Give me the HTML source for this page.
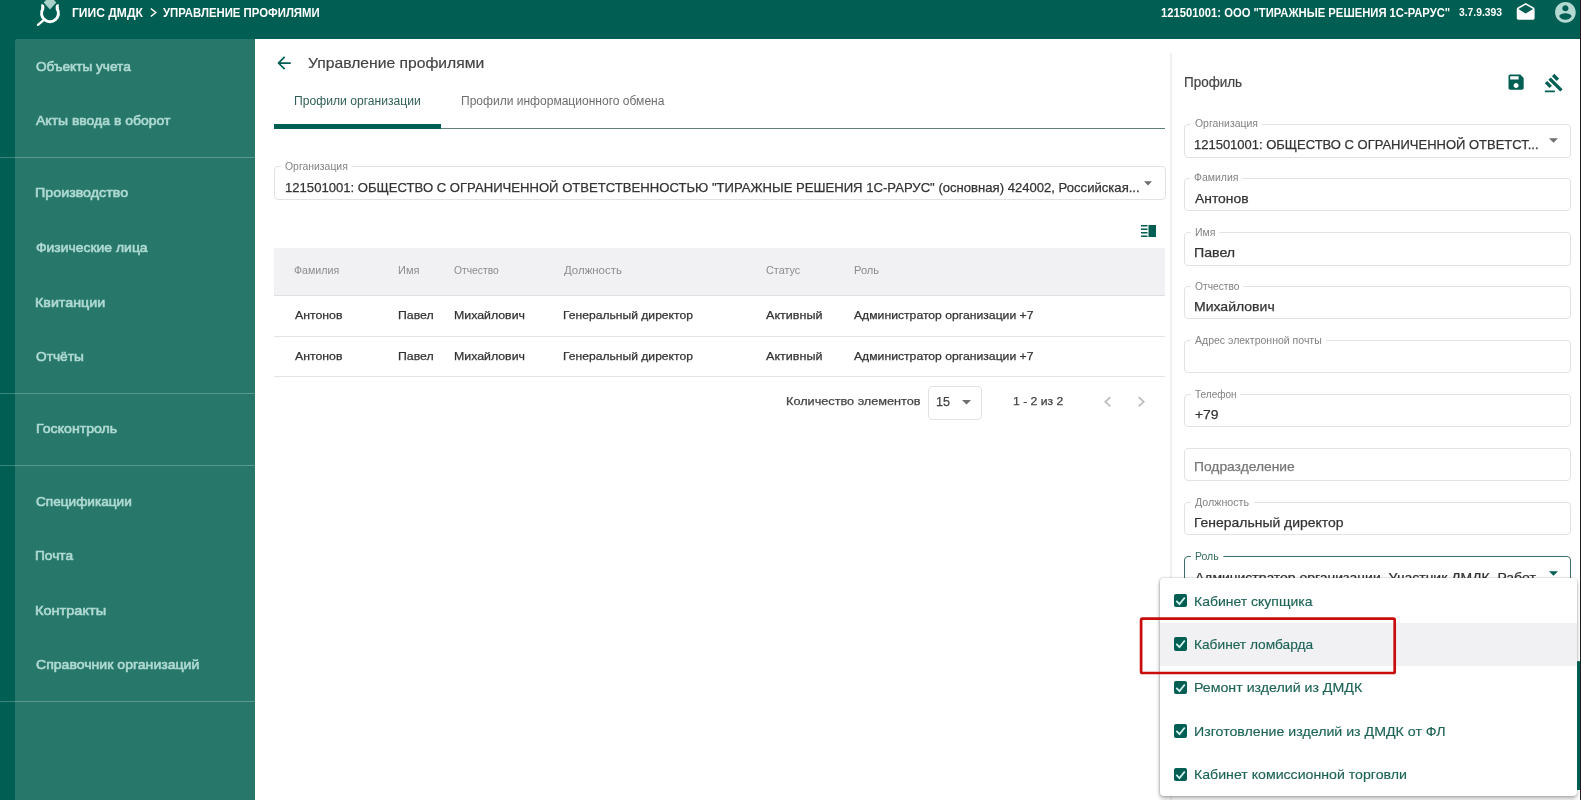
<!DOCTYPE html>
<html lang="ru">
<head>
<meta charset="utf-8">
<title>ГИИС ДМДК — Управление профилями</title>
<style>
*{box-sizing:border-box;margin:0;padding:0}
html,body{width:1581px;height:800px;overflow:hidden;background:#fff}
body{font-family:"Liberation Sans",sans-serif;position:relative;color:#333}
#app{position:absolute;left:0;top:0;width:1581px;height:800px;overflow:hidden;will-change:transform}
.abs{position:absolute;white-space:nowrap;line-height:1;transform-origin:0 0}
#hdr{position:absolute;left:0;top:0;width:1581px;height:44px;background:#005e52}
#strip{position:absolute;left:0;top:39px;width:15px;height:761px;background:#005e52}
#main{position:absolute;left:255px;top:39px;width:1326px;height:761px;background:#fff}
#side{position:absolute;left:15px;top:39px;width:240.500px;height:761px;background:#27786b;border-top-left-radius:2px}
.hb{color:#fff;font-weight:bold;font-size:12px}
.mi{color:#b0dad2;font-weight:normal;font-size:13.500px;-webkit-text-stroke:0.600px #b0dad2}
.dv{position:absolute;left:0;width:255px;height:1px;background:rgba(255,255,255,.24)}
.fld{position:absolute;border:1px solid #e2e2e2;border-radius:4px;background:#fff}
.lbl{font-size:10px;color:#828282;background:#fff;box-shadow:4px 0 0 #fff,-4px 0 0 #fff}
.val{font-size:13.500px;color:#333;-webkit-text-stroke:0.250px}
.th{font-size:10.500px;color:#8c8c8c}
.td{font-size:11.600px;color:#333;-webkit-text-stroke:0.250px}
.opt{font-size:13.500px;color:#1c6356;-webkit-text-stroke:0.150px}
.cb{position:absolute;width:13.400px;height:13.400px;background:#005e52;border-radius:2px}
.cb svg{position:absolute;left:0;top:0}
</style>
</head>
<body>
<div id="app">
<div id="hdr"></div>
<div id="strip"></div>
<div id="side"></div>
<div id="main"></div>

<svg class="abs" style="left:34px;top:0" width="30" height="28" viewBox="0 0 30 28">
  <path d="M8.800 4.200 L8.730 9 A8.400 8.400 0 1 0 23.270 9 L23.200 4.200" fill="none" stroke="#fff" stroke-width="3.100" stroke-linejoin="round"/>
  <line x1="9.300" y1="20.400" x2="4" y2="24.800" stroke="#fff" stroke-width="2.400" stroke-linecap="round"/>
  <polygon points="16,-4.400 22.400,2.600 16,9.600 9.600,2.600" fill="#005e52" stroke="#005e52" stroke-width="3.200"/>
  <polygon points="16,-4.400 22.300,2.600 16,9.500 9.700,2.600" fill="#a9d1ca"/>
</svg>
<div class="abs hb" id="h1" style="left:72.41px;top:6.5px;transform:scaleX(1.0057);">ГИИС ДМДК</div>
<svg class="abs" style="left:149px;top:7px" width="9" height="11" viewBox="0 0 9 11"><path d="M1.800 1.500 L6.800 5.500 L1.800 9.500" fill="none" stroke="#fff" stroke-width="1.500"/></svg>
<div class="abs hb" id="h2" style="left:163.33px;top:6.5px;transform:scaleX(0.9467);">УПРАВЛЕНИЕ ПРОФИЛЯМИ</div>
<div class="abs hb" id="h3" style="left:1161.45px;top:6.5px;transform:scaleX(0.9372);">121501001: ООО "ТИРАЖНЫЕ РЕШЕНИЯ 1С-РАРУС"</div>
<div class="abs hb" id="h4" style="left:1458.57px;top:6.8px;font-size:10.500px;transform:scaleX(0.982);">3.7.9.393</div>
<svg class="abs" style="left:1514.800px;top:1.800px" width="21.400" height="21.400" viewBox="0 0 24 24"><path fill="#fff" d="M21.990 8c0-.72-.37-1.350-.94-1.700L12 1 2.950 6.300C2.380 6.650 2 7.280 2 8v10c0 1.100.9 2 2 2h16c1.100 0 2-.9 2-2l-.01-10zM12 13L3.740 7.840 12 3l8.260 4.840L12 13z"/></svg>
<svg class="abs" style="left:1553.200px;top:-0.100px" width="24.800" height="24.800" viewBox="0 0 24 24"><path fill="#b4d8d2" d="M12 2C6.480 2 2 6.480 2 12s4.480 10 10 10 10-4.480 10-10S17.520 2 12 2zm0 3c1.660 0 3 1.340 3 3s-1.340 3-3 3-3-1.340-3-3 1.340-3 3-3zm0 14.200c-2.500 0-4.710-1.280-6-3.220.03-1.990 4-3.080 6-3.080 1.990 0 5.970 1.090 6 3.080-1.290 1.940-3.500 3.220-6 3.220z"/></svg>
<div class="abs mi" id="m1" style="left:35.7px;top:59.6px;transform:scaleX(1.0102);">Объекты учета</div>
<div class="abs mi" id="m2" style="left:36.25px;top:114px;transform:scaleX(1.0351);">Акты ввода в оборот</div>
<div class="abs mi" id="m3" style="left:35.41px;top:186.4px;transform:scaleX(1.0581);">Производство</div>
<div class="abs mi" id="m4" style="left:35.87px;top:240.6px;transform:scaleX(1.0317);">Физические лица</div>
<div class="abs mi" id="m5" style="left:35.14px;top:295.6px;transform:scaleX(1.057);">Квитанции</div>
<div class="abs mi" id="m6" style="left:35.83px;top:350px;transform:scaleX(1.013);">Отчёты</div>
<div class="abs mi" id="m7" style="left:35.51px;top:422.4px;transform:scaleX(1.0482);">Госконтроль</div>
<div class="abs mi" id="m8" style="left:35.61px;top:494.6px;transform:scaleX(1.0082);">Спецификации</div>
<div class="abs mi" id="m9" style="left:35.31px;top:549px;transform:scaleX(1.0157);">Почта</div>
<div class="abs mi" id="m10" style="left:35.09px;top:603.8px;transform:scaleX(1.0777);">Контракты</div>
<div class="abs mi" id="m11" style="left:35.54px;top:658px;transform:scaleX(1.0424);">Справочник организаций</div>
<div class="dv" style="top:157px"></div>
<div class="dv" style="top:393px"></div>
<div class="dv" style="top:465px"></div>
<div class="dv" style="top:701px"></div>
<svg class="abs" style="left:274.300px;top:53.050px" width="20.100" height="20.100" viewBox="0 0 24 24"><path fill="#005e52" d="M20 11H7.830l5.590-5.590L12 4l-8 8 8 8 1.410-1.410L7.830 13H20v-2z"/></svg>
<div class="abs " id="t1" style="left:307.72px;top:55.4px;font-size:15.500px;color:#444;-webkit-text-stroke:0.200px;transform:scaleX(1.0116);">Управление профилями</div>
<div class="abs " id="tab1" style="left:294.07px;top:94.8px;font-size:12px;color:#2f5f57;transform:scaleX(1.0103);">Профили организации</div>
<div class="abs " id="tab2" style="left:461.28px;top:94.8px;font-size:12px;color:#6e6e6e;transform:scaleX(1.0027);">Профили информационного обмена</div>
<div style="position:absolute;left:274px;top:128px;width:891px;height:1px;background:#5f7f79"></div>
<div style="position:absolute;left:274px;top:124px;width:167px;height:5px;background:#005e52"></div>
<div class="fld" style="left:274px;top:166px;width:892px;height:34px"></div>
<div class="abs lbl" id="l0" style="left:284.78px;top:162.0px;transform:scaleX(1.0412);">Организация</div>
<div class="abs val" id="v0" style="left:284.74px;top:180.7px;transform:scaleX(0.9699);">121501001: ОБЩЕСТВО С ОГРАНИЧЕННОЙ ОТВЕТСТВЕННОСТЬЮ "ТИРАЖНЫЕ РЕШЕНИЯ 1С-РАРУС" (основная) 424002, Российская...</div>
<svg class="abs" style="left:1144px;top:181px" width="8" height="5" viewBox="0 0 8 5"><path d="M0 0.300h8L4 4.600z" fill="#6f6f6f"/></svg>
<svg class="abs" style="left:1141px;top:225px" width="16" height="13" viewBox="0 0 16 13"><path fill="#005e52" d="M0 0h6.500v1.500H0zM0 3.500h6.500v1.500H0zM0 7h6.500v1.500H0zM0 10.500h6.500v1.500H0zM7.500 0H15v12H7.500z"/></svg>
<div style="position:absolute;left:274px;top:248px;width:891px;height:48px;background:#f1f1f3;border-bottom:1px solid #dfdfdf"></div>
<div class="abs th" id="th1" style="left:294.26px;top:265.2px;transform:scaleX(1.0125);">Фамилия</div>
<div class="abs th" id="th2" style="left:398.0px;top:265.2px;transform:scaleX(1.0463);">Имя</div>
<div class="abs th" id="th3" style="left:454.23px;top:265.2px;transform:scaleX(0.9812);">Отчество</div>
<div class="abs th" id="th4" style="left:563.68px;top:265.2px;transform:scaleX(1.0892);">Должность</div>
<div class="abs th" id="th5" style="left:765.71px;top:265.2px;transform:scaleX(1.033);">Статус</div>
<div class="abs th" id="th6" style="left:853.56px;top:265.2px;transform:scaleX(1.0589);">Роль</div>
<div class="abs td" id="r1a" style="left:294.88px;top:309.2px;transform:scaleX(1.0602);">Антонов</div>
<div class="abs td" id="r1b" style="left:397.71px;top:309.2px;transform:scaleX(1.0582);">Павел</div>
<div class="abs td" id="r1c" style="left:453.65px;top:309.2px;transform:scaleX(1.0629);">Михайлович</div>
<div class="abs td" id="r1d" style="left:563.18px;top:309.2px;transform:scaleX(1.0449);">Генеральный директор</div>
<div class="abs td" id="r1e" style="left:765.91px;top:309.2px;transform:scaleX(1.0835);">Активный</div>
<div class="abs td" id="r1f" style="left:854.32px;top:309.2px;transform:scaleX(1.0505);">Администратор организации +7</div>
<div class="abs td" id="r2a" style="left:294.88px;top:350.1px;transform:scaleX(1.0602);">Антонов</div>
<div class="abs td" id="r2b" style="left:397.71px;top:350.1px;transform:scaleX(1.0582);">Павел</div>
<div class="abs td" id="r2c" style="left:453.65px;top:350.1px;transform:scaleX(1.0629);">Михайлович</div>
<div class="abs td" id="r2d" style="left:563.18px;top:350.1px;transform:scaleX(1.0449);">Генеральный директор</div>
<div class="abs td" id="r2e" style="left:765.91px;top:350.1px;transform:scaleX(1.0835);">Активный</div>
<div class="abs td" id="r2f" style="left:854.32px;top:350.1px;transform:scaleX(1.0505);">Администратор организации +7</div>
<div style="position:absolute;left:274px;top:336px;width:891px;height:1px;background:#e4e4e4"></div>
<div style="position:absolute;left:274px;top:376px;width:891px;height:1px;background:#e4e4e4"></div>
<div class="abs td" id="pg1" style="left:786.18px;top:395.3px;color:#444;transform:scaleX(1.0941);">Количество элементов</div>
<div class="fld" style="left:928px;top:386px;width:54px;height:34px"></div>
<div class="abs td" id="pg2" style="left:935.99px;top:396.1px;color:#444;font-size:12px;transform:scaleX(1.0428);">15</div>
<svg class="abs" style="left:961.500px;top:400.300px" width="9" height="5" viewBox="0 0 9 5"><path d="M0 0h9L4.500 4.600z" fill="#6f6f6f"/></svg>
<div class="abs td" id="pg3" style="left:1012.85px;top:395.3px;color:#444;transform:scaleX(1.0515);">1 - 2 из 2</div>
<svg class="abs" style="left:1103px;top:396px" width="9" height="12" viewBox="0 0 9 12"><path d="M7.300 1.200L2.300 5.800l5 4.600" fill="none" stroke="#bcbcbc" stroke-width="1.700"/></svg>
<svg class="abs" style="left:1137px;top:396px" width="9" height="12" viewBox="0 0 9 12"><path d="M1.700 1.200L6.700 5.800l-5 4.600" fill="none" stroke="#bcbcbc" stroke-width="1.700"/></svg>
<div style="position:absolute;left:1170px;top:53px;width:2px;height:747px;background:#f0f0f2"></div>
<div class="abs " id="p1" style="left:1183.8px;top:75px;font-size:14.200px;color:#444;-webkit-text-stroke:0.200px;transform:scaleX(0.9488);">Профиль</div>
<svg class="abs" style="left:1506.400px;top:72.400px" width="20.200" height="20.200" viewBox="0 0 24 24"><path fill="#005e52" d="M17 3H5c-1.110 0-2 .9-2 2v14c0 1.100.89 2 2 2h14c1.100 0 2-.9 2-2V7l-4-4zm-5 16c-1.660 0-3-1.340-3-3s1.340-3 3-3 3 1.340 3 3-1.340 3-3 3zm3-10H5V5h10v4z"/></svg>
<svg class="abs" style="left:1544px;top:72.550px" width="20.100" height="20.100" viewBox="0 0 24 24"><path fill="#005e52" d="M1 21h12v2H1zM5.245 8.070l2.830-2.827 14.140 14.142-2.828 2.828zM12.317 1l5.657 5.656-2.830 2.830-5.654-5.660zM3.825 9.485l5.657 5.657-2.828 2.828-5.657-5.657z"/></svg>
<div class="fld" style="left:1184px;top:124px;width:387px;height:34px;"></div>
<div class="abs lbl" id="l1" style="left:1194.65px;top:119.4px;transform:scaleX(1.0442);">Организация</div>
<div class="abs val" id="v1" style="left:1194.02px;top:137.6px;transform:scaleX(0.9622);">121501001: ОБЩЕСТВО С ОГРАНИЧЕННОЙ ОТВЕТСТ...</div>
<svg class="abs" style="left:1548.600px;top:138.3px" width="9" height="5" viewBox="0 0 9 5"><path d="M0 0.200h9L4.500 4.700z" fill="#6f6f6f"/></svg>
<div class="fld" style="left:1184px;top:178px;width:387px;height:33px;"></div>
<div class="abs lbl" id="l2" style="left:1194.47px;top:173.4px;transform:scaleX(1.0466);">Фамилия</div>
<div class="abs val" id="v2" style="left:1194.58px;top:191.7px;transform:scaleX(1.0272);">Антонов</div>
<div class="fld" style="left:1184px;top:232px;width:387px;height:34px;"></div>
<div class="abs lbl" id="l3" style="left:1194.5px;top:227.6px;transform:scaleX(1.0466);">Имя</div>
<div class="abs val" id="v3" style="left:1194.09px;top:245.9px;transform:scaleX(1.0499);">Павел</div>
<div class="fld" style="left:1184px;top:286px;width:387px;height:33px;"></div>
<div class="abs lbl" id="l4" style="left:1194.59px;top:281.7px;transform:scaleX(1.0241);">Отчество</div>
<div class="abs val" id="v4" style="left:1194.1px;top:299.6px;transform:scaleX(1.0382);">Михайлович</div>
<div class="fld" style="left:1184px;top:340px;width:387px;height:33px;"></div>
<div class="abs lbl" id="l5" style="left:1194.89px;top:335.8px;transform:scaleX(1.0509);">Адрес электронной почты</div>
<div class="fld" style="left:1184px;top:394px;width:387px;height:33px;"></div>
<div class="abs lbl" id="l6" style="left:1194.93px;top:390.0px;transform:scaleX(1.0028);">Телефон</div>
<div class="abs val" id="v6" style="left:1194.5px;top:407.6px;transform:scaleX(1.0272);">+79</div>
<div class="fld" style="left:1184px;top:448px;width:387px;height:33px;"></div>
<div class="abs val" id="v7" style="left:1194.3px;top:460.2px;color:#777;transform:scaleX(1.0239);">Подразделение</div>
<div class="fld" style="left:1184px;top:502px;width:387px;height:33px;"></div>
<div class="abs lbl" id="l8" style="left:1195.35px;top:498.0px;transform:scaleX(1.068);">Должность</div>
<div class="abs val" id="v8" style="left:1194.11px;top:516.2px;transform:scaleX(1.0325);">Генеральный директор</div>
<div class="fld" style="left:1184px;top:556px;width:387px;height:36px;border:1px solid #3f6f68;"></div>
<div class="abs lbl" id="l9" style="left:1194.5px;top:551.8px;color:#33695f;transform:scaleX(1.0466);">Роль</div>
<div class="abs val" id="v9" style="left:1194.5px;top:570.5px;transform:scaleX(1.0327);">Администратор организации, Участник ДМДК, Работ...</div>
<svg class="abs" style="left:1548.600px;top:570.7px" width="9" height="5" viewBox="0 0 9 5"><path d="M0 0.200h9L4.500 4.700z" fill="#005e52"/></svg>
<div style="position:absolute;left:1160px;top:578px;width:417px;height:217.500px;background:#fff;border-radius:4px;box-shadow:0 0 0 1px rgba(0,0,0,.05),0 3px 4px rgba(0,0,0,.26),-1px 0 3px rgba(0,0,0,.12)"></div>
<div style="position:absolute;left:1160px;top:623.300px;width:417px;height:42.600px;background:#f1f1f3"></div>
<div class="cb" style="left:1174px;top:594px"><svg width="13.400" height="13.400" viewBox="0 0 13.400 13.400"><path d="M2.300 6.900L5.500 10.100L10.800 3.500" fill="none" stroke="#d4f3ee" stroke-width="1.800"/></svg></div>
<div class="abs opt" id="o1" style="left:1193.88px;top:594.5px;transform:scaleX(1.0361);">Кабинет скупщика</div>
<div class="cb" style="left:1174px;top:637.4px"><svg width="13.400" height="13.400" viewBox="0 0 13.400 13.400"><path d="M2.300 6.900L5.500 10.100L10.800 3.500" fill="none" stroke="#d4f3ee" stroke-width="1.800"/></svg></div>
<div class="abs opt" id="o2" style="left:1194.06px;top:637.8px;transform:scaleX(1.0158);">Кабинет ломбарда</div>
<div class="cb" style="left:1174px;top:681px"><svg width="13.400" height="13.400" viewBox="0 0 13.400 13.400"><path d="M2.300 6.900L5.500 10.100L10.800 3.500" fill="none" stroke="#d4f3ee" stroke-width="1.800"/></svg></div>
<div class="abs opt" id="o3" style="left:1193.94px;top:681.4px;transform:scaleX(1.0506);">Ремонт изделий из ДМДК</div>
<div class="cb" style="left:1174px;top:724.3px"><svg width="13.400" height="13.400" viewBox="0 0 13.400 13.400"><path d="M2.300 6.900L5.500 10.100L10.800 3.500" fill="none" stroke="#d4f3ee" stroke-width="1.800"/></svg></div>
<div class="abs opt" id="o4" style="left:1193.95px;top:724.7px;transform:scaleX(1.0507);">Изготовление изделий из ДМДК от ФЛ</div>
<div class="cb" style="left:1174px;top:767.5px"><svg width="13.400" height="13.400" viewBox="0 0 13.400 13.400"><path d="M2.300 6.900L5.500 10.100L10.800 3.500" fill="none" stroke="#d4f3ee" stroke-width="1.800"/></svg></div>
<div class="abs opt" id="o5" style="left:1193.95px;top:768px;transform:scaleX(1.0476);">Кабинет комиссионной торговли</div>
<div style="position:absolute;left:1577px;top:661px;width:3px;height:129px;background:#005e52;border-radius:1px 1px 0 0"></div>
<svg class="abs" style="left:1136px;top:614px" width="264" height="64" viewBox="0 0 264 64"><rect x="5.100" y="4.700" width="253.600" height="54.300" rx="1.200" fill="none" stroke="#c90d0d" stroke-width="2.700"/></svg>
<div style="position:absolute;left:1580px;top:0;width:1px;height:800px;background:#1c1c1c"></div>
</div>
</body>
</html>
